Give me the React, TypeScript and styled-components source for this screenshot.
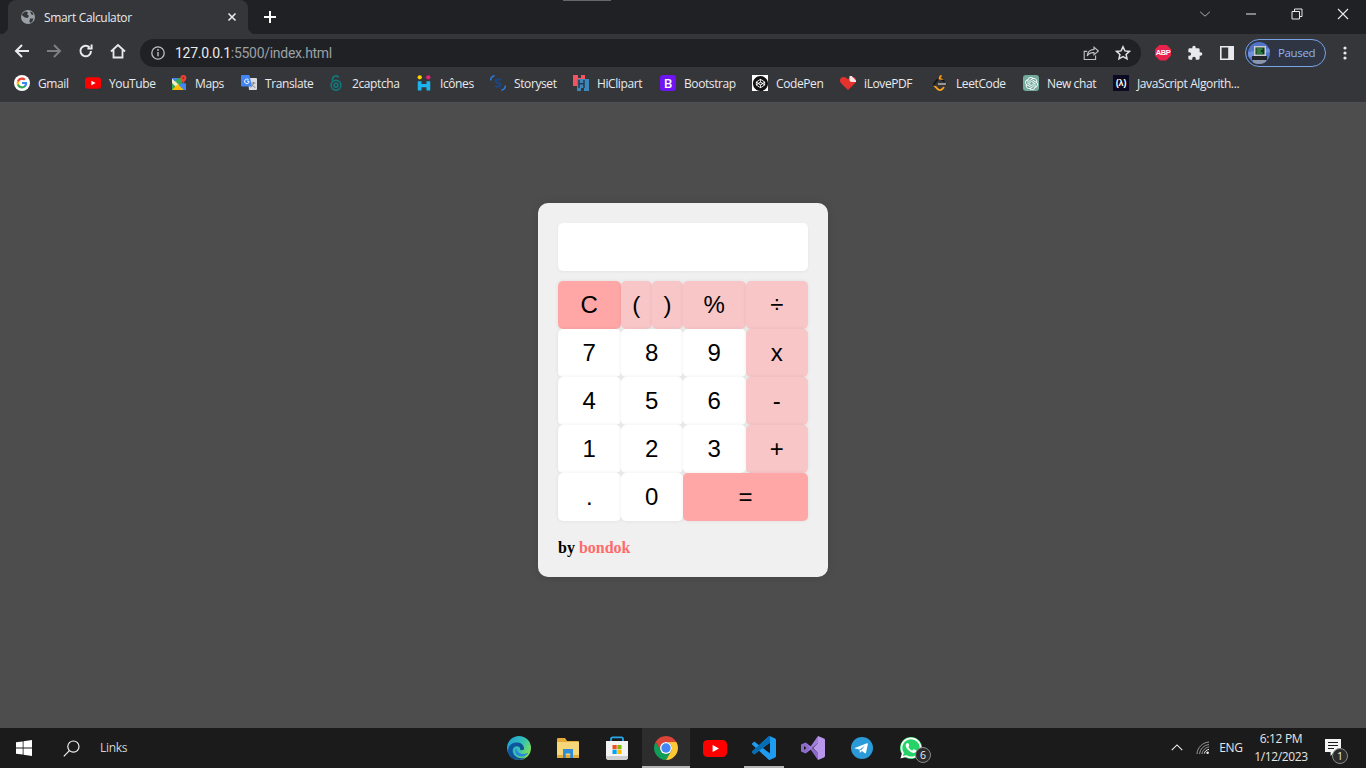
import React from 'react';
import styled, { createGlobalStyle, css } from 'styled-components';
import { SiOpenai, SiLeetcode, SiCodepen } from 'react-icons/si';
import { FaWhatsapp } from 'react-icons/fa';

const UI = `"Open Sans", "Noto Sans", "Liberation Sans", sans-serif`;

const Global = createGlobalStyle`
  html, body { margin: 0; height: 100%; overflow: hidden; background: #4d4d4d; }
  * { box-sizing: border-box; }
  svg { display: block; }
`;

const Screen = styled.div`
  height: 100vh;
  display: flex;
  flex-direction: column;
  font-family: ${UI};
`;

/* Tab strip */
const TabStrip = styled.header`
  height: 34px;
  background: #202124;
  display: flex;
  align-items: stretch;
  padding-left: 8px;
  flex: none;
  position: relative;
`;
const TopMark = styled.i`
  position: absolute;
  left: 563px;
  top: 0;
  width: 48px;
  height: 1px;
  background: #66676b;
`;
const Tab = styled.div`
  position: relative;
  width: 240px;
  background: #35363a;
  border-radius: 8px 8px 0 0;
  display: flex;
  align-items: center;
  padding: 0 8px 0 12px;
  &::before, &::after {
    content: '';
    position: absolute;
    bottom: 0;
    width: 8px;
    height: 8px;
  }
  &::before { left: -8px; background: radial-gradient(circle at 0 0, #202124 8px, #35363a 8.5px); }
  &::after { right: -8px; background: radial-gradient(circle at 100% 0, #202124 8px, #35363a 8.5px); }
`;
const TabTitle = styled.span`
  flex: 1;
  margin-left: 8px;
  font-size: 12px;
  color: #e8eaed;
  letter-spacing: -0.33px;
  white-space: nowrap;
`;
const NewTab = styled.div`
  width: 28px;
  margin-left: 8px;
  display: flex;
  align-items: center;
  justify-content: center;
`;
const WindowControls = styled.div`
  margin-left: auto;
  display: flex;
`;
const WinBtn = styled.div`
  width: 46px;
  display: flex;
  align-items: center;
  justify-content: center;
  padding-bottom: 6px;
`;

/* Toolbar */
const Toolbar = styled.div`
  height: 33px;
  flex: none;
  background: #35363a;
  display: flex;
  align-items: center;
  padding: 0 5px 0 6px;
`;
const NavSlot = styled.div`
  width: 32px;
  height: 28px;
  flex: none;
  display: flex;
  align-items: center;
  justify-content: center;
`;
const Omnibox = styled.div`
  flex: 1;
  height: 28px;
  margin: 4px 6px 0;
  background: #202124;
  border-radius: 14px;
  display: flex;
  align-items: center;
  padding: 0 2px 0 10px;
`;
const Url = styled.div`
  flex: 1;
  margin-left: 9px;
  font-family: Roboto, "Open Sans", sans-serif;
  font-size: 14px;
  letter-spacing: -0.28px;
  color: #9aa0a6;
  white-space: nowrap;
`;
const UrlHost = styled.span`
  color: #e8eaed;
`;
const ToolGroup = styled.div`
  display: flex;
  align-items: center;
  margin-top: 4px;
`;
const Abp = styled.div`
  width: 16px;
  height: 16px;
  background: #e8234b;
  clip-path: polygon(30% 0, 70% 0, 100% 30%, 100% 70%, 70% 100%, 30% 100%, 0 70%, 0 30%);
  color: #fff;
  font: bold 7.5px/16px "Liberation Sans", sans-serif;
  text-align: center;
  letter-spacing: -0.4px;
`;
const ProfilePill = styled.div`
  width: 81px;
  height: 28px;
  margin: 0 3px 0 2px;
  border: 1px solid #78a2e6;
  border-radius: 14px;
  background: #2f3543;
  display: flex;
  align-items: center;
  padding-left: 2px;
  flex: none;
`;
const PausedLabel = styled.span`
  margin-left: 8px;
  font-size: 11.5px;
  color: #8ab4f8;
  letter-spacing: -0.35px;
`;

/* Bookmarks */
const Bookmarks = styled.nav`
  height: 36px;
  flex: none;
  background: #35363a;
  border-bottom: 1px solid #4f5054;
  display: flex;
  align-items: center;
  padding: 0 0 3px 14px;
  gap: 16px;
`;
const Bookmark = styled.div`
  display: flex;
  align-items: center;
  gap: 8px;
  flex: none;
`;
const BookmarkLabel = styled.span<{ $w: number }>`
  display: block;
  width: ${p => p.$w}px;
  font-size: 12px;
  color: #e8eaed;
  letter-spacing: -0.4px;
  white-space: nowrap;
`;
const IconBox = styled.span`
  width: 16px;
  height: 16px;
  flex: none;
  display: flex;
  align-items: center;
  justify-content: center;
`;
const BootstrapBadge = styled(IconBox)`
  background: #7014f2;
  border-radius: 3px;
  color: #fff;
  font: 600 13px/16px "Open Sans", sans-serif;
`;
const CodeBadge = styled(IconBox)`
  background: #0a0a23;
  color: #fff;
  font: bold 9px/16px "Liberation Sans", sans-serif;
  letter-spacing: -0.2px;
`;
const ChatBadge = styled(IconBox)`
  background: #74aa9c;
  border-radius: 3px;
  color: #fff;
`;
const PenBadge = styled(IconBox)`
  background: #fff;
  color: #111;
`;

/* Page */
const Page = styled.main`
  flex: 1;
  background: #4d4d4d;
  display: flex;
  justify-content: center;
  align-items: flex-start;
  padding-top: 100px;
`;
const Calculator = styled.section`
  width: 290px;
  height: 374px;
  background: #f0f0f0;
  border-radius: 10px;
  padding: 20px;
  box-shadow: 0 0 10px rgba(0, 0, 0, 0.12);
`;
const Display = styled.div`
  height: 48px;
  background: #fff;
  border-radius: 5px;
  box-shadow: 0 1px 3px rgba(0, 0, 0, 0.05);
  margin-bottom: 10px;
`;
const Keys = styled.div`
  display: grid;
  grid-template-columns: repeat(4, 62.5px);
  grid-auto-rows: 48px;
`;
const Pair = styled.div`
  display: grid;
  grid-template-columns: 1fr 1fr;
`;
const Key = styled.button<{ $tone?: 'num' | 'op' | 'hot'; $wide?: boolean }>`
  border: 0;
  margin: 0;
  padding: 0;
  border-radius: 5px;
  font-family: "Liberation Sans", Arial, sans-serif;
  font-size: 24px;
  color: #000;
  background: ${p => (p.$tone === 'hot' ? '#ffa6a6' : p.$tone === 'op' ? '#f9c6c8' : '#fff')};
  box-shadow: 0 0 4px rgba(0, 0, 0, 0.07);
  ${p => p.$wide && css`grid-column: span 2;`}
`;
const Credit = styled.p`
  margin: 18px 0 0;
  font-family: "Liberation Serif", "Times New Roman", serif;
  font-weight: bold;
  font-size: 16px;
  line-height: 18px;
  color: #000;
`;
const CreditName = styled.span`
  color: #ff6b6b;
`;

/* Taskbar */
const Taskbar = styled.footer`
  height: 40px;
  flex: none;
  background: #1b1b1b;
  display: flex;
  align-items: stretch;
  position: relative;
`;
const StartArea = styled.div`
  width: 495px;
  flex: none;
  display: flex;
  align-items: center;
  padding-left: 16px;
`;
const SearchIcon = styled.span`
  margin-left: 31px;
`;
const Links = styled.span`
  margin: 0 0 2px 20px;
  font-size: 12px;
  color: #d4d4d4;
  letter-spacing: -0.3px;
`;
const Apps = styled.div`
  display: flex;
  gap: 1px;
`;
const AppSlot = styled.div<{ $active?: boolean; $open?: boolean }>`
  position: relative;
  width: 48px;
  display: flex;
  align-items: center;
  justify-content: center;
  ${p => p.$active && css`background: #2d2d2d;`}
  ${p => (p.$active || p.$open) && css`
    &::after {
      content: '';
      position: absolute;
      bottom: 0;
      height: 2px;
      left: ${p.$active ? 0 : 4}px;
      right: ${p.$active ? 0 : 4}px;
      background: #b4b4b4;
    }
  `}
`;
const Count = styled.span`
  position: absolute;
  width: 16px;
  height: 16px;
  border-radius: 50%;
  background: #2b2b2b;
  border: 1px solid #8a8a8a;
  color: #f0f0f0;
  font-size: 10.5px;
  line-height: 14px;
  text-align: center;
`;
const AppCount = styled(Count)`
  left: 28px;
  top: 19px;
`;
const Tray = styled.div`
  margin-left: auto;
  display: flex;
  align-items: center;
`;
const TrayIcon = styled.span`
  width: 26px;
  display: flex;
  justify-content: center;
`;
const Lang = styled.span`
  margin: 0 0 2px 3px;
  width: 24px;
  font-size: 12px;
  color: #e6e6e6;
  text-align: center;
  letter-spacing: -0.3px;
  white-space: nowrap;
`;
const Clock = styled.div`
  width: 76px;
  text-align: center;
  font-size: 12px;
  line-height: 18px;
  color: #e6e6e6;
  letter-spacing: -0.35px;
`;
const Notify = styled.div`
  position: relative;
  width: 42px;
  height: 100%;
  display: flex;
  align-items: center;
  padding-left: 6px;
`;
const NotifyCount = styled(Count)`
  left: 13px;
  top: 20px;
`;
const ShowDesktop = styled.div`
  width: 5px;
  border-left: 1px solid #5a5a5a;
`;

/* Icons */
const Stroke = ({ d, c = '#e8eaed', w = 2, s = 16, vb = 16 }: { d: string; c?: string; w?: number; s?: number; vb?: number }) => (
  <svg width={s} height={s} viewBox={`0 0 ${vb} ${vb}`} fill="none" stroke={c} strokeWidth={w}>
    <path d={d} />
  </svg>
);

const Globe = () => (
  <svg width="16" height="16" viewBox="0 0 16 16">
    <circle cx="8" cy="8" r="7" fill="#9aa0a6" />
    <path d="M2 5l3-2.6L8 3 7.2 5.2 9 7 7.5 9 5 8.4 2.4 6.8zM10 9.4l3.4.2-1 3-2 1.4-1-1.6zM10 2.4l2.6 1.2L13.6 6 11.4 5.4z" fill="#35363a" />
  </svg>
);

const GoogleG = ({ s = 16 }: { s?: number }) => (
  <svg width={s} height={s} viewBox="0 0 26 26">
    <circle cx="13" cy="13" r="13" fill="#fff" />
    <g transform="translate(3.4 3.4) scale(.8)">
      <path fill="#4285F4" d="M22.56 12.25c0-.78-.07-1.53-.2-2.25H12v4.26h5.92c-.26 1.37-1.04 2.53-2.21 3.31v2.77h3.57c2.08-1.92 3.28-4.74 3.28-8.09z" />
      <path fill="#34A853" d="M12 23c2.97 0 5.46-.98 7.28-2.66l-3.57-2.77c-.98.66-2.23 1.06-3.71 1.06-2.86 0-5.29-1.93-6.16-4.53H2.18v2.84C3.99 20.53 7.7 23 12 23z" />
      <path fill="#FBBC05" d="M5.84 14.09c-.22-.66-.35-1.36-.35-2.09s.13-1.43.35-2.09V7.07H2.18C1.43 8.55 1 10.22 1 12s.43 3.45 1.18 4.93l3.66-2.84z" />
      <path fill="#EA4335" d="M12 5.38c1.62 0 3.06.56 4.21 1.64l3.15-3.15C17.45 2.09 14.97 1 12 1 7.7 1 3.99 3.47 2.18 7.07l3.66 2.84c.87-2.6 3.3-4.53 6.16-4.53z" />
    </g>
  </svg>
);

const YouTube = ({ w = 16, h = 12 }: { w?: number; h?: number }) => (
  <svg width={w} height={h} viewBox="0 0 24 17">
    <rect width="24" height="17" rx="4.5" fill="#f00" />
    <path d="M9.6 5l6.4 3.5L9.6 12z" fill="#fff" />
  </svg>
);

const Maps = () => (
  <svg width="16" height="16" viewBox="0 0 16 16">
    <path d="M1 3h10v12H1z" fill="#34a853" />
    <path d="M1 3l12 12H8L1 8z" fill="#f4ecc8" />
    <path d="M1 15l6-6 6 6z" fill="#fbbc04" />
    <path d="M1 3h6L4 6.4 1 3.4z" fill="#4285f4" />
    <path d="M8 10.4l3-2.4 4 .4V15h-2z" fill="#4285f4" />
    <path d="M12.4 0a3 3 0 0 1 3 3c0 2-2 3.4-3 5.6-1-2.2-3-3.6-3-5.6a3 3 0 0 1 3-3z" fill="#ea4335" />
    <circle cx="12.4" cy="3" r="1" fill="#a52714" />
  </svg>
);

const Translate = () => (
  <svg width="16" height="16" viewBox="0 0 16 16">
    <path d="M7 3h8a1 1 0 0 1 1 1v10a1 1 0 0 1-1 1H8z" fill="#dadce0" />
    <path d="M10.5 8h4M12.5 7v1c0 2-1.5 3.6-3 4.2M11 9.5c.6 1.4 2 2.6 3.4 3" stroke="#80868b" strokeWidth="1" fill="none" />
    <path d="M1 0h7.4l2.6 11.4H1a1 1 0 0 1-1-1V1a1 1 0 0 1 1-1z" fill="#4285f4" />
    <path d="M6.8 5.4v1.3h1.4A2.3 2.3 0 1 1 7.6 4.8" stroke="#fff" strokeWidth="1" fill="none" />
  </svg>
);

const Captcha = () => (
  <svg width="16" height="16" viewBox="0 0 16 18" fill="none" stroke="#0f7a7c" strokeWidth="1.8">
    <circle cx="8" cy="11.5" r="5.5" />
    <circle cx="8" cy="11.5" r="2.2" />
    <path d="M4.2 6.5V4.4A3.6 3.6 0 0 1 11 3" />
  </svg>
);

const Icones = () => (
  <svg width="16" height="16" viewBox="0 0 16 18">
    <circle cx="3.2" cy="2.6" r="2.4" fill="#fbd400" />
    <circle cx="12.8" cy="2.6" r="2.4" fill="#ec1e79" />
    <path d="M1 7h4.2v3.2h5.6V7H15v10.5h-4.2v-3.6H5.2v3.6H1z" fill="#1bb4f0" />
  </svg>
);

const Storyset = () => (
  <svg width="16" height="16" viewBox="0 0 16 16" fill="none">
    <path d="M4.6 .8A5 5 0 0 0 .6 5.6" stroke="#2a7de1" strokeWidth="1.5" />
    <path d="M11.4 15.2a5 5 0 0 0 4-4.8" stroke="#2a7de1" strokeWidth="1.5" />
    <path d="M11 5.2C9.5 3.8 5.8 4.2 5.8 6.2c0 2.4 4.8 1.2 4.8 3.6 0 2-3.6 2.4-5.4 1" stroke="#1e4478" strokeWidth="2.4" />
  </svg>
);

const HiClipart = () => (
  <svg width="16" height="16" viewBox="0 0 16 16">
    <path d="M0 0h5v3h3V0h4v11H0z" fill="#f2555f" />
    <path d="M4 4h12v12h-5v-3H8v3H4z" fill="#3d86b8" />
    <path d="M5.2 5h1.6v3h3.4V5h1.6v8h-1.6V9.6H6.8V13H5.2z" fill="#263c55" />
  </svg>
);

const Heart = () => (
  <svg width="16" height="14" viewBox="0 0 16 14">
    <path d="M8 14L1 7.2C-1.2 4.8.2 1 3.6 1 5.4 1 7 2 8 3.4 9 2 10.6 1 12.4 1c3.4 0 4.8 3.8 2.6 6.2z" fill="#e5322d" />
    <path d="M9.5 0h2.2L16 4.5V6h-4a2.5 2.5 0 0 1-2.5-2.5z" fill="#fbe3e2" />
  </svg>
);

const Leet = () => (
  <svg width="16" height="16" viewBox="0 0 24 24">
    <defs>
      <clipPath id="leetTop"><rect width="24" height="16" /></clipPath>
      <clipPath id="leetTip"><rect x="10" width="14" height="7" /></clipPath>
      <clipPath id="leetBot"><rect y="16" width="24" height="8" /></clipPath>
    </defs>
    <g clipPath="url(#leetTop)"><SiLeetcode size={24} color="#16161a" /></g>
    <g clipPath="url(#leetTip)"><SiLeetcode size={24} color="#f89f1b" /></g>
    <g clipPath="url(#leetBot)"><SiLeetcode size={24} color="#f89f1b" /></g>
    <path d="M9 13.5h12" stroke="#b3b3b3" strokeWidth="2.4" />
  </svg>
);

const Info = () => (
  <svg width="16" height="16" viewBox="0 0 16 16" fill="none">
    <circle cx="8" cy="8" r="6.2" stroke="#bdc1c6" strokeWidth="1.3" />
    <path d="M8 7v4.2" stroke="#bdc1c6" strokeWidth="1.4" />
    <circle cx="8" cy="5" r=".9" fill="#bdc1c6" />
  </svg>
);

const Share = () => (
  <svg width="16" height="16" viewBox="0 0 16 16" fill="none" stroke="#bdc1c6" strokeWidth="1.1">
    <path d="M11 2.2l4.4 3.8-4.4 3.8V7.6C8 7.4 5.6 8.6 4.2 11 4.4 7.4 7 4.8 11 4.4z" />
    <path d="M12.6 10.4v4.1H1.2V6.4h3" />
  </svg>
);

const Star = () => (
  <svg width="16" height="16" viewBox="0 0 16 16" fill="none" stroke="#dfe1e5" strokeWidth="1.5">
    <path d="M8 1.8l1.9 4.1 4.5.5-3.3 3 .9 4.4L8 11.6l-4 2.2.9-4.4-3.3-3 4.5-.5z" />
  </svg>
);

const Puzzle = () => (
  <svg width="16" height="16" viewBox="0 0 24 24" fill="#e8eaed">
    <path d="M20.5 11H19V7a2 2 0 0 0-2-2h-4V3.5a2.5 2.5 0 0 0-5 0V5H4a2 2 0 0 0-2 2v3.8h1.5a2.7 2.7 0 0 1 0 5.4H2V20a2 2 0 0 0 2 2h3.8v-1.5a2.7 2.7 0 0 1 5.4 0V22H17a2 2 0 0 0 2-2v-4h1.5a2.5 2.5 0 0 0 0-5z" />
  </svg>
);

const SidePanel = () => (
  <svg width="14" height="14" viewBox="0 0 14 14">
    <path fillRule="evenodd" d="M0 0h14v14H0zM1.6 1.6v10.8h6.6V1.6z" fill="#e8eaed" />
  </svg>
);

const Avatar = () => (
  <svg width="22" height="22" viewBox="0 0 22 22">
    <defs><clipPath id="av"><circle cx="11" cy="11" r="11" /></clipPath></defs>
    <g clipPath="url(#av)">
      <rect width="22" height="22" fill="#4f74c8" />
      <path d="M0 10l22-4v4L0 16z" fill="#6f90dc" />
      <rect x="6" y="4" width="12" height="10" fill="#c8cad0" />
      <rect x="7.5" y="5.5" width="9" height="7" fill="#16361e" />
      <path d="M8.5 7h6M8.5 9h4.5M8.5 11h6" stroke="#4fd06a" strokeWidth=".9" />
      <rect x="4" y="14" width="15" height="4" fill="#23252b" />
      <rect x="5" y="18" width="13" height="4" fill="#8b94a8" />
    </g>
  </svg>
);

const Dots = () => (
  <svg width="4" height="14" viewBox="0 0 4 14" fill="#e8eaed">
    <circle cx="2" cy="2" r="1.6" /><circle cx="2" cy="7" r="1.6" /><circle cx="2" cy="12" r="1.6" />
  </svg>
);

const WindowsLogo = () => (
  <svg width="16" height="16" viewBox="0 0 16 16" fill="#fff">
    <path d="M0 2.3l6.7-.9v6.2H0zM7.5 1.3L16 0v7.6H7.5zM0 8.4h6.7v6.2L0 13.7zM7.5 8.4H16V16l-8.5-1.2z" />
  </svg>
);

const Search = () => (
  <svg width="17" height="17" viewBox="0 0 17 17" fill="none" stroke="#f2f2f2" strokeWidth="1.2">
    <circle cx="10.4" cy="6.6" r="5.6" /><path d="M6.4 10.6L.8 16.4" />
  </svg>
);

const Edge = () => (
  <svg width="24" height="24" viewBox="0 0 24 24">
    <defs>
      <linearGradient id="edgeA" x1="0" y1="0" x2="1" y2=".6">
        <stop offset="0" stopColor="#1b9de2" /><stop offset=".6" stopColor="#35c1b0" /><stop offset="1" stopColor="#7de05b" />
      </linearGradient>
      <linearGradient id="edgeB" x1="0" y1="0" x2="1" y2="1">
        <stop offset="0" stopColor="#0c59a4" /><stop offset="1" stopColor="#114a8b" />
      </linearGradient>
    </defs>
    <circle cx="12" cy="12" r="12" fill="url(#edgeA)" />
    <path d="M1 15C1 8 7 6 11 6.6c4 .6 6 3.4 6 6.2 0 1.2-1.2 1.4-3.6 1.4 0-2.6-1.2-4-3.4-4C5 10.2 4 17 9 20.6c3 2.2 7 2 10 .4-2 2-4.6 3-7 3-6 0-11-4-11-9z" fill="url(#edgeB)" />
    <path d="M9.4 12.2c-2.4 2.6-.6 7.6 4 8.2 3 .4 5.6-.6 7.6-3 .3-.5 0-.8-.5-.5-3 1.4-5.4 1.2-7.4.4-2.2-.9-3.6-2.8-3.7-5.1z" fill="#2a86d8" />
  </svg>
);

const Explorer = () => (
  <svg width="22" height="20" viewBox="0 0 22 20">
    <path d="M0 1a1 1 0 0 1 1-1h7l2 3h11a1 1 0 0 1 1 1v2H0z" fill="#e5ab38" />
    <path d="M0 4h22v15a1 1 0 0 1-1 1H1a1 1 0 0 1-1-1z" fill="#f5d679" />
    <path d="M0 17h22v2a1 1 0 0 1-1 1H1a1 1 0 0 1-1-1z" fill="#e5ab38" />
    <path d="M6 11h10v9h-2.8v-4.6H8.8V20H6z" fill="#2f8cd8" />
  </svg>
);

const Store = () => (
  <svg width="24" height="24" viewBox="0 0 24 24">
    <path d="M6 6V3a1.6 1.6 0 0 1 1.6-1.6h8.8A1.6 1.6 0 0 1 18 3v3" fill="none" stroke="#28a8ea" strokeWidth="1.8" />
    <path d="M1 5h22v16a3 3 0 0 1-3 3H4a3 3 0 0 1-3-3z" fill="#f3f3f3" />
    <path d="M1 20h22v1a3 3 0 0 1-3 3H4a3 3 0 0 1-3-3z" fill="#cfcfcf" />
    <rect x="7.5" y="9" width="4.2" height="4.2" fill="#f25022" />
    <rect x="12.3" y="9" width="4.2" height="4.2" fill="#7fba00" />
    <rect x="7.5" y="13.8" width="4.2" height="4.2" fill="#00a4ef" />
    <rect x="12.3" y="13.8" width="4.2" height="4.2" fill="#ffb900" />
  </svg>
);

const Chrome = () => (
  <svg width="24" height="24" viewBox="2 2 44 44">
    <path fill="#db4437" d="M24 2a22 22 0 0 1 19.05 11H24a11 11 0 0 0-9.53 16.5L4.95 13A22 22 0 0 1 24 2z" />
    <path fill="#0f9d58" d="M4.95 13l9.52 16.5A11 11 0 0 0 33.53 29.5L24 46A22 22 0 0 1 4.95 13z" />
    <path fill="#fcc934" d="M43.05 13A22 22 0 0 1 24 46l9.53-16.5A11 11 0 0 0 24 13z" />
    <circle cx="24" cy="24" r="11" fill="#fff" />
    <circle cx="24" cy="24" r="8.6" fill="#4285f4" />
  </svg>
);

const VsCode = () => (
  <svg width="24" height="24" viewBox="0 0 24 24">
    <path fill="#1f9cf0" d="M23.15 2.587L18.21.21a1.494 1.494 0 0 0-1.705.29l-9.46 8.63-4.12-3.128a.999.999 0 0 0-1.276.057L.327 7.261A1 1 0 0 0 .326 8.74L3.899 12 .326 15.26a1 1 0 0 0 .001 1.479L1.65 17.94a.999.999 0 0 0 1.276.057l4.12-3.128 9.46 8.63a1.492 1.492 0 0 0 1.704.29l4.942-2.377A1.5 1.5 0 0 0 24 20.06V3.939a1.5 1.5 0 0 0-.85-1.352zm-5.146 14.861L10.826 12l7.178-5.448v10.896z" />
    <path fill="#0065a9" d="M18 0v6.6L7.05 14.87l-4.12 3.128a.999.999 0 0 1-1.276-.057L.327 16.74a1 1 0 0 1 0-1.48L16.5.5C17 0 17.5 0 18 0z" opacity=".85" />
  </svg>
);

const VisualStudio = () => (
  <svg width="24" height="24" viewBox="0 0 24 24">
    <path fill="#8e6bcb" d="M0 8.4l4.6-2L17 17v7L9.6 13.4 4.6 17.6 0 15.6z" />
    <path fill="#a27fdc" d="M17 0v7L4.6 17.6 9 12 4.6 6.4 9.6 10.6z" />
    <path fill="#b896ec" d="M17 0l6 2.6c.6.3 1 .8 1 1.4v16c0 .6-.4 1.1-1 1.4L17 24V17l-5-5 5-5z" />
    <path fill="#1b1b1b" d="M3 10l2.4 2L3 14z" />
  </svg>
);

const Telegram = () => (
  <svg width="22" height="22" viewBox="0 0 22 22">
    <circle cx="11" cy="11" r="11" fill="#2a9bd8" />
    <path d="M4.4 10.8l11.6-4.6c.6-.2 1 .2.9.9L15 15.8c-.1.7-.6.8-1.1.5l-3-2.2-1.5 1.4c-.3.3-.6.1-.6-.3l-.2-2.8-4.5-1c-.6-.1-.6-.4-.1-.6z" fill="#fff" />
    <path d="M8.8 12.4l5-3.6-3.6 4.4z" fill="#2a9bd8" />
  </svg>
);

const WhatsApp = () => (
  <svg width="24" height="24" viewBox="0 0 24 24">
    <circle cx="12" cy="12" r="11" fill="#25d366" />
    <FaWhatsapp size={24} color="#fff" />
  </svg>
);

const TrayChevron = () => <Stroke d="M2 10.5L8 4.5l6 6" c="#f0f0f0" w={1.3} s={14} />;

const Wifi = () => (
  <svg width="14" height="14" viewBox="0 0 14 14" fill="none" stroke="#9a9a9a" strokeWidth="1">
    <path d="M1 13C1.4 6.5 6.5 1.5 13 1M3.6 13C4 8 8 4 13 3.6M6 13c.2-3.4 3.4-6.8 7-7" />
    <circle cx="11.6" cy="11.8" r="1.3" fill="#f0f0f0" stroke="none" />
    <path d="M8.4 12.6c.1-2 2-4 4.6-4.2" stroke="#e8e8e8" />
  </svg>
);

const Bubble = () => (
  <svg width="16" height="18" viewBox="0 0 16 18">
    <path d="M0 0h16v13H9.4L5.6 17v-4H0z" fill="#f4f4f4" />
    <path d="M3 3.5h10M3 6.5h10M3 9.5h6" stroke="#1b1b1b" strokeWidth="1" />
  </svg>
);

const bookmarkRow: { label: string; w: number; icon: React.ReactNode }[] = [
  { label: 'Gmail', w: 31, icon: <GoogleG /> },
  { label: 'YouTube', w: 46, icon: <YouTube /> },
  { label: 'Maps', w: 30, icon: <Maps /> },
  { label: 'Translate', w: 47, icon: <Translate /> },
  { label: '2captcha', w: 48, icon: <Captcha /> },
  { label: 'Icônes', w: 34, icon: <Icones /> },
  { label: 'Storyset', w: 43, icon: <Storyset /> },
  { label: 'HiClipart', w: 47, icon: <HiClipart /> },
  { label: 'Bootstrap', w: 52, icon: <BootstrapBadge>B</BootstrapBadge> },
  { label: 'CodePen', w: 48, icon: <PenBadge><SiCodepen size={15} /></PenBadge> },
  { label: 'iLovePDF', w: 52, icon: <Heart /> },
  { label: 'LeetCode', w: 51, icon: <Leet /> },
  { label: 'New chat', w: 50, icon: <ChatBadge><SiOpenai size={13} /></ChatBadge> },
  { label: 'JavaScript Algorith...', w: 108, icon: <CodeBadge>(λ)</CodeBadge> },
];

type KeyDef = { t: string; tone?: 'num' | 'op' | 'hot'; wide?: boolean };
const rows: KeyDef[] = [
  { t: '7' }, { t: '8' }, { t: '9' }, { t: 'x', tone: 'op' },
  { t: '4' }, { t: '5' }, { t: '6' }, { t: '-', tone: 'op' },
  { t: '1' }, { t: '2' }, { t: '3' }, { t: '+', tone: 'op' },
  { t: '.' }, { t: '0' }, { t: '=', tone: 'hot', wide: true },
];

export default function App() {
  return (
    <>
      <Global />
      <Screen>
        <TabStrip>
          <TopMark />
          <Tab>
            <IconBox><Globe /></IconBox>
            <TabTitle>Smart Calculator</TabTitle>
            <Stroke d="M4.5 4.5l7 7m0-7l-7 7" w={1.6} />
          </Tab>
          <NewTab><Stroke d="M8 2v12M2 8h12" c="#fff" w={2} /></NewTab>
          <WindowControls>
            <WinBtn><Stroke d="M2.5 5.5L8 10.5l5.5-5" c="#bdc1c6" w={1} s={14} /></WinBtn>
            <WinBtn><Stroke d="M3 8h10" c="#e8eaed" w={1} /></WinBtn>
            <WinBtn><Stroke d="M3 5.5h7.5v7.5H3zM5.5 5.5V3H13v7.5h-2.5" c="#e8eaed" w={1} /></WinBtn>
            <WinBtn><Stroke d="M3 3l10 10M13 3L3 13" c="#e8eaed" w={1.1} /></WinBtn>
          </WindowControls>
        </TabStrip>

        <Toolbar>
          <NavSlot><Stroke d="M15 8H2M8 2L2 8l6 6" /></NavSlot>
          <NavSlot><Stroke d="M1 8h13M8 2l6 6-6 6" c="#7d7f83" /></NavSlot>
          <NavSlot><Stroke d="M13 8a5.3 5.3 0 1 1-1.5-3.7M13.6 1.4v4.2H9.4" /></NavSlot>
          <NavSlot><Stroke d="M1 8.5L8 2l7 6.5M3.5 7v7.5h9V7" w={1.8} /></NavSlot>
          <Omnibox>
            <IconBox><Info /></IconBox>
            <Url><UrlHost>127.0.0.1</UrlHost>:5500/index.html</Url>
            <NavSlot><Share /></NavSlot>
            <NavSlot><Star /></NavSlot>
          </Omnibox>
          <ToolGroup>
            <NavSlot><Abp>ABP</Abp></NavSlot>
            <NavSlot><Puzzle /></NavSlot>
            <NavSlot><SidePanel /></NavSlot>
            <ProfilePill><Avatar /><PausedLabel>Paused</PausedLabel></ProfilePill>
            <NavSlot><Dots /></NavSlot>
          </ToolGroup>
        </Toolbar>

        <Bookmarks>
          {bookmarkRow.map(b => (
            <Bookmark key={b.label}>
              <IconBox>{b.icon}</IconBox>
              <BookmarkLabel $w={b.w}>{b.label}</BookmarkLabel>
            </Bookmark>
          ))}
        </Bookmarks>

        <Page>
          <Calculator>
            <Display />
            <Keys>
              <Key $tone="hot">C</Key>
              <Pair>
                <Key $tone="op">(</Key>
                <Key $tone="op">)</Key>
              </Pair>
              <Key $tone="op">%</Key>
              <Key $tone="op">÷</Key>
              {rows.map(k => (
                <Key key={k.t} $tone={k.tone} $wide={k.wide}>{k.t}</Key>
              ))}
            </Keys>
            <Credit>by <CreditName>bondok</CreditName></Credit>
          </Calculator>
        </Page>

        <Taskbar>
          <StartArea>
            <WindowsLogo />
            <SearchIcon><Search /></SearchIcon>
            <Links>Links</Links>
          </StartArea>
          <Apps>
            <AppSlot><Edge /></AppSlot>
            <AppSlot><Explorer /></AppSlot>
            <AppSlot><Store /></AppSlot>
            <AppSlot $active><Chrome /></AppSlot>
            <AppSlot><YouTube w={24} h={17} /></AppSlot>
            <AppSlot $open><VsCode /></AppSlot>
            <AppSlot><VisualStudio /></AppSlot>
            <AppSlot><Telegram /></AppSlot>
            <AppSlot><WhatsApp /><AppCount>6</AppCount></AppSlot>
          </Apps>
          <Tray>
            <TrayIcon><TrayChevron /></TrayIcon>
            <TrayIcon><Wifi /></TrayIcon>
            <Lang>ENG</Lang>
            <Clock>6:12 PM<br />1/12/2023</Clock>
            <Notify><Bubble /><NotifyCount>1</NotifyCount></Notify>
            <ShowDesktop />
          </Tray>
        </Taskbar>
      </Screen>
    </>
  );
}
